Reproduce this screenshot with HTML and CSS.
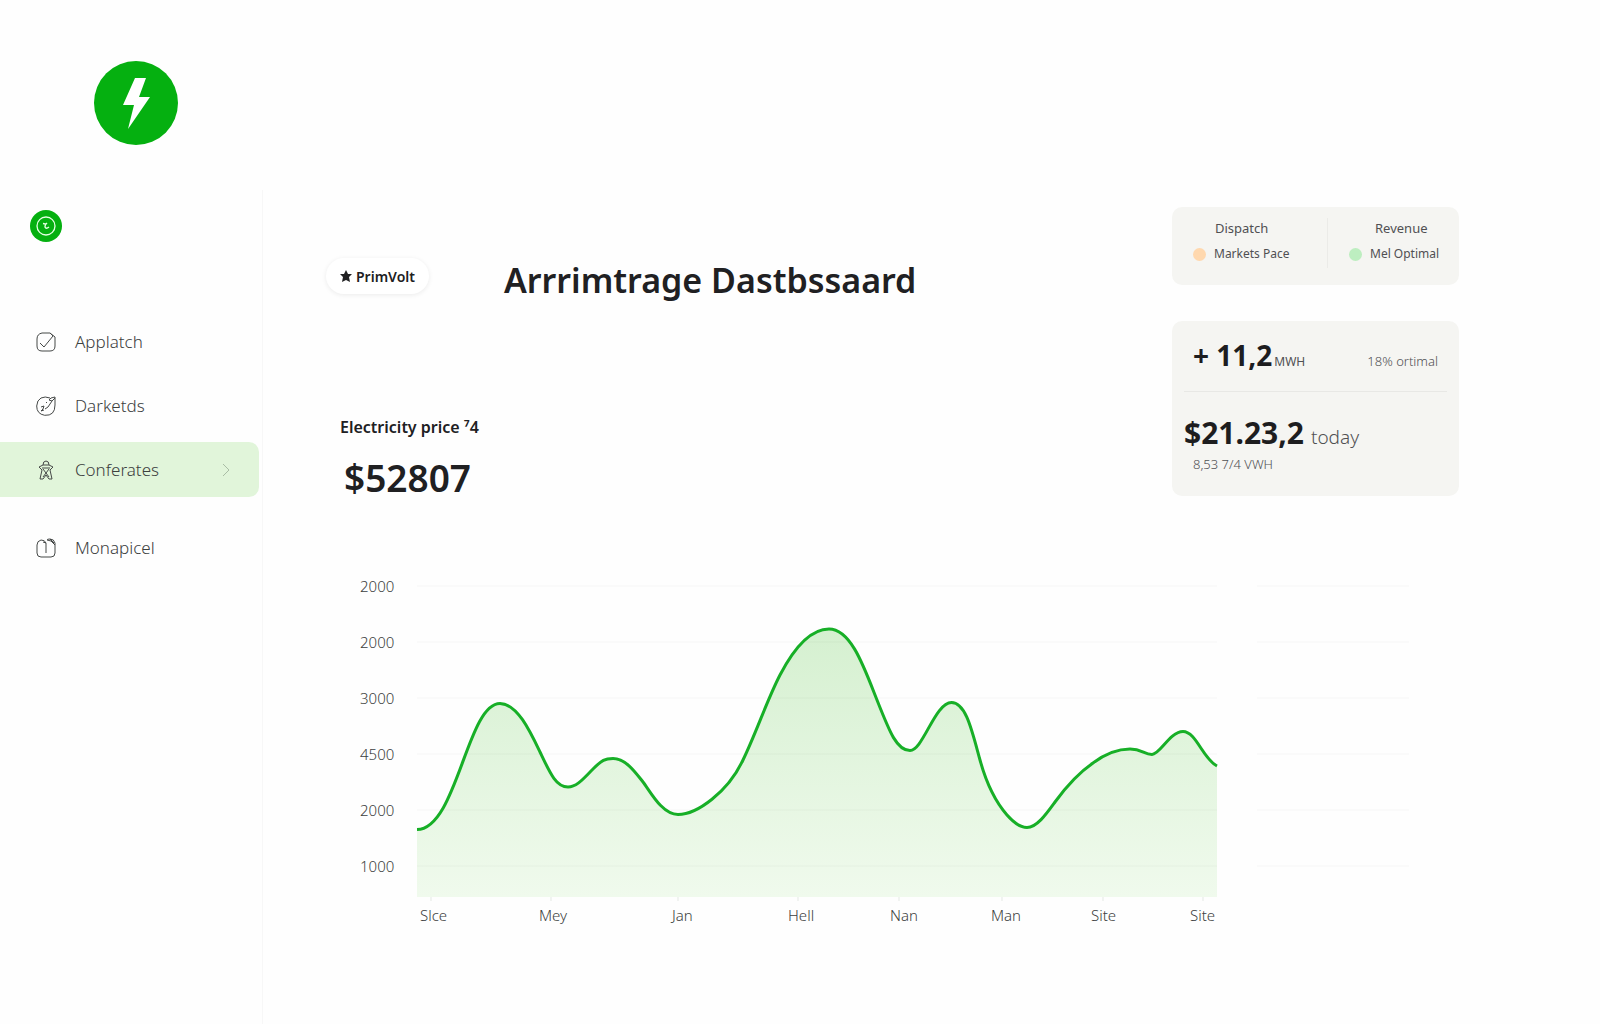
FILE: index.html
```html
<!DOCTYPE html>
<html lang="en">
<head>
<meta charset="utf-8">
<meta name="viewport" content="width=device-width, initial-scale=1">
<title>PrimVolt</title>
<link rel="stylesheet" href="styles.css">
</head>
<body>
<header class="topbar">
  <svg class="logo" viewBox="0 0 84 84" role="img" aria-label="PrimVolt">
    <circle cx="42" cy="42" r="42" fill="#05b010"/>
    <path d="M41 17h11l-7 19h11L34 68l6-24H29z" fill="#fff"/>
  </svg>
</header>
<div class="layout">
  <aside class="sidebar">
    <svg class="account" viewBox="0 0 32 32" role="img" aria-label="Account">
      <circle cx="16" cy="16" r="16" fill="#05b010"/>
      <circle cx="16" cy="16" r="9" fill="none" stroke="#e4ffe2" stroke-width="1.3"/>
      <path d="M13 13.500l2.500 .500-.500 3q1 2.500 4 0M15 15l2-2" fill="none" stroke="#e4ffe2" stroke-width="1.400"/>
    </svg>
    <nav class="nav">
      <a class="nav-item" href="#">
        <svg class="icon" viewBox="0 0 20 20"><path d="M6 1h8l5 4v9q0 5-5 5H6q-5 0-5-5V7q0-5 5-6zM4 11l4 4L17 4M14 1l3 3"/></svg>
        <span>Applatch</span>
      </a>
      <a class="nav-item" href="#">
        <svg class="icon" viewBox="0 0 20 20"><path d="M14 2Q9 0 5 2 1 4 .7 10q0 8 8 9.300Q19 20 19 9V1l-4 1-2 2 3 1 3-3M16 5l-4 6-3 2M5 11l3-1-1 3-2 2 3-1M10 7l1-1"/></svg>
        <span>Darketds</span>
      </a>
      <a class="nav-item active" href="#">
        <svg class="icon" viewBox="0 0 20 20"><path d="M7 5q0-4 3-4t3 4M3 7l4-2h6l4 2-3 3 2 9h-3l-3-4-3 4H4l2-9zM6 8h8M7 9l6 8M13 9l-6 8"/></svg>
        <span>Conferates</span>
        <svg class="chevron" viewBox="0 0 8 14"><path d="M1 1l6 6-6 6"/></svg>
      </a>
      <a class="nav-item last" href="#">
        <svg class="icon" viewBox="0 0 20 20"><path d="M10 15V5Q9 2 5 2 1 3 1 7v8q0 4 4 4h10q4 0 4-4V5q-1-4-5-4-3 0-3 1l4 1 4 4M7 4l3 1M14 1l4 4"/></svg>
        <span>Monapicel</span>
      </a>
    </nav>
  </aside>
  <main class="main">
    <div class="overview">
      <section class="summary">
        <div class="heading">
          <button class="badge" type="button">
            <svg class="star" viewBox="0 0 12 12"><path d="M6 0l2 4h4L9 7l1 5-4-2-4 2 1-5-3-3h4z"/></svg>
            PrimVolt
          </button>
          <h1 class="title">Arrrimtrage Dastbssaard</h1>
        </div>
        <h2 class="price-label">Electricity price <span class="price-note">⁷4</span></h2>
        <p class="price">$52807</p>
      </section>
      <section class="cards">
        <div class="card legend">
          <div class="legend-group">
            <span class="legend-title">Dispatch</span>
            <span class="legend-row"><i class="dot orange"></i>Markets Pace</span>
          </div>
          <div class="legend-group">
            <span class="legend-title">Revenue</span>
            <span class="legend-row"><i class="dot green"></i>Mel Optimal</span>
          </div>
        </div>
        <div class="card stats">
          <div class="stat-row energy">
            <span class="stat-value">+ 11,2</span><span class="unit">MWH</span>
            <span class="share">18% ortimal</span>
          </div>
          <div class="stat-row"><span class="stat-value money">$21.23,2</span><span class="period">today</span></div>
          <p class="stat-note">8,53 7/4 VWH</p>
        </div>
      </section>
    </div>
    <section class="chart" aria-label="Electricity price">
      <div class="y-axis"><span>2000</span><span>2000</span><span>3000</span><span>4500</span><span>2000</span><span>1000</span></div>
      <svg class="plot" viewBox="0 -28 800 339" preserveAspectRatio="none">
        <defs>
          <linearGradient id="area" x1="0" y1="0" x2="0" y2="1">
            <stop offset="0" stop-color="#d5f0d0"/>
            <stop offset="1" stop-color="#f0faed"/>
          </linearGradient>
        </defs>
        <path fill="url(#area)" d="M0 243.500C40 243 50 117.500 83 117.500 100 117.500 113 145 123 166S139 201 151 201C160 201 167 192 176 183S188 172.500 196 172.500C209 172.500 219 187 226 196S245 228.500 261 228.500C280 228.500 311 206 326 174 340 145 350 114 363 89 375 66 392 43 412 43 434 43 447 81 460 114S480 164.500 493 164.500 518 116.500 534.500 116.500C549 116.500 555 145 563 174 569 196 577 214 590 229 597 237 603 241.500 610 241.500 620 241.500 630 227 638 216S660 188 676 177C688 168 701 163 713 163S727 168.500 735 168.500 753 145.500 766 145.500 786 173 800 180V311H0z"/>
        <path class="grid" d="M0 0H800M0 56H800M0 112H800M0 168H800M0 224H800M0 280H800"/>
        <path class="line" d="M0 243.500C40 243 50 117.500 83 117.500 100 117.500 113 145 123 166S139 201 151 201C160 201 167 192 176 183S188 172.500 196 172.500C209 172.500 219 187 226 196S245 228.500 261 228.500C280 228.500 311 206 326 174 340 145 350 114 363 89 375 66 392 43 412 43 434 43 447 81 460 114S480 164.500 493 164.500 518 116.500 534.500 116.500C549 116.500 555 145 563 174 569 196 577 214 590 229 597 237 603 241.500 610 241.500 620 241.500 630 227 638 216S660 188 676 177C688 168 701 163 713 163S727 168.500 735 168.500 753 145.500 766 145.500 786 173 800 180"/>
        <path class="tick" d="M14 311v4M134 311v4M261 311v4M381 311v4M482 311v4M585 311v4M686 311v4M786 311v4"/>
      </svg>
      <svg class="rules" viewBox="0 -28 152 339" preserveAspectRatio="none"><path class="grid" d="M0 0H152M0 56H152M0 112H152M0 168H152M0 224H152M0 280H152"/></svg>
      <div class="x-axis"><span>Slce</span><span>Mey</span><span>Jan</span><span>Hell</span><span>Nan</span><span>Man</span><span>Site</span><span>Site</span></div>
    </section>
  </main>
</div>
</body>
</html>
```
FILE: styles.css
```css
* { box-sizing: border-box; }

body {
  margin: 0;
  min-height: 100vh;
  display: flex;
  flex-direction: column;
  background: #fefefe;
  color: #202022;
  font-family: "Noto Sans", "Open Sans", sans-serif;
}

h1, h2, p { margin: 0; }
svg { display: block; }

.topbar { padding: 61px 94px 45px; }
.logo { width: 84px; height: 84px; }

.layout {
  flex: 1;
  display: grid;
  grid-template-columns: 263px minmax(0, 1fr);
}

/* Sidebar */
.sidebar { border-right: 1px solid #f7f7f7; padding-top: 20px; }
.account { width: 32px; height: 32px; margin-left: 30px; }
.nav {
  display: flex;
  flex-direction: column;
  gap: 9px;
  margin: 72px 3px 0 0;
}
.nav-item {
  display: flex;
  align-items: center;
  gap: 19px;
  height: 55px;
  padding: 0 29px 0 36px;
  border-radius: 0 10px 10px 0;
  color: #3c403e;
  font-size: 17px;
  font-weight: 300;
  text-decoration: none;
}
.nav-item.active { background: #e1f5da; }
.nav-item.last { margin-top: 14px; }
.icon {
  width: 20px;
  height: 20px;
  fill: none;
  stroke: #454847;
  stroke-linejoin: round;
}
.chevron {
  width: 8px;
  height: 14px;
  margin-left: auto;
  fill: none;
  stroke: #a9bda5;
}

/* Overview */
.main { padding: 17px 0 0 1px; }
.overview {
  display: flex;
  align-items: flex-start;
  justify-content: space-between;
  padding: 0 141px 0 62px;
}
.summary { padding-top: 51px; }
.heading { display: flex; align-items: flex-start; gap: 75px; }
.badge {
  display: flex;
  align-items: center;
  gap: 4px;
  height: 36px;
  padding: 0 14px;
  border: 0;
  border-radius: 18px;
  background: #fff;
  box-shadow: 0 1px 5px rgba(0, 0, 0, .08);
  color: #202022;
  font: 600 14px "Noto Sans", sans-serif;
}
.star { width: 12px; height: 12px; fill: #202022; }
.title { font-size: 34px; font-weight: 600; line-height: 44px; }
.price-label {
  margin: 113px 0 0 14px;
  font-size: 16px;
  font-weight: 600;
  line-height: 24px;
}
.price {
  margin: 14px 0 0 18px;
  font-size: 37px;
  font-weight: 600;
  line-height: 50px;
}

/* Cards */
.cards { width: 287px; display: grid; gap: 36px; }
.card { border-radius: 10px; background: #f5f5f2; color: #505052; }
.legend {
  display: grid;
  grid-template-columns: 156px 1fr;
  height: 78px;
  padding: 11px 0 17px;
  font-size: 12px;
  line-height: 20px;
}
.legend-group {
  display: grid;
  gap: 6px;
  align-content: start;
  padding-left: 21px;
}
.legend-group:first-child { border-right: 1px solid #ebebe8; }
.legend-title { padding-left: 22px; font-size: 13px; }
.legend-group + .legend-group .legend-title { padding-left: 26px; }
.legend-row { display: flex; align-items: center; gap: 8px; white-space: nowrap; }
.dot { width: 13px; height: 13px; border-radius: 50%; }
.orange { background: #ffd8ae; }
.green { background: #bdeec0; }

.stats { height: 175px; padding: 0 12px; }
.stat-row { display: flex; align-items: baseline; }
.energy {
  height: 71px;
  padding: 12px 9px 0;
  border-bottom: 1px solid #e8e8e5;
}
.stat-value {
  color: #1d1d1f;
  font-size: 28px;
  font-weight: 700;
  line-height: 44px;
}
.unit { margin-left: 2px; font-size: 12px; }
.share { margin-left: auto; font-size: 13px; font-weight: 300; }
.money { margin-top: 19px; font-size: 30px; }
.period { margin-left: 7px; font-size: 19px; font-weight: 300; }
.stat-note { margin-left: 9px; font-size: 13px; font-weight: 300; line-height: 18px; }

/* Chart */
.chart {
  display: grid;
  grid-template-columns: 57px minmax(0, 800fr) minmax(0, 192fr);
  margin-top: 55px;
  padding: 0 191px 60px 96px;
  color: #3c3e40;
  font-size: 15px;
  font-weight: 300;
}
.y-axis { display: grid; grid-auto-rows: 56px; align-items: center; }
.plot, .rules { width: 100%; height: 339px; }
.plot { overflow: visible; }
.rules { padding-left: 40px; }
.grid { fill: none; stroke: #000; stroke-opacity: .03; vector-effect: non-scaling-stroke; }
.line { fill: none; stroke: #17af27; stroke-width: 3; vector-effect: non-scaling-stroke; }
.tick { stroke: #e4e9e4; }
.x-axis {
  grid-column: 2;
  display: grid;
  grid-template-columns: 119fr 133fr 116fr 102fr 101fr 100fr 99fr 27fr;
  padding: 8px 0 0 3px;
  line-height: 20px;
}
```
